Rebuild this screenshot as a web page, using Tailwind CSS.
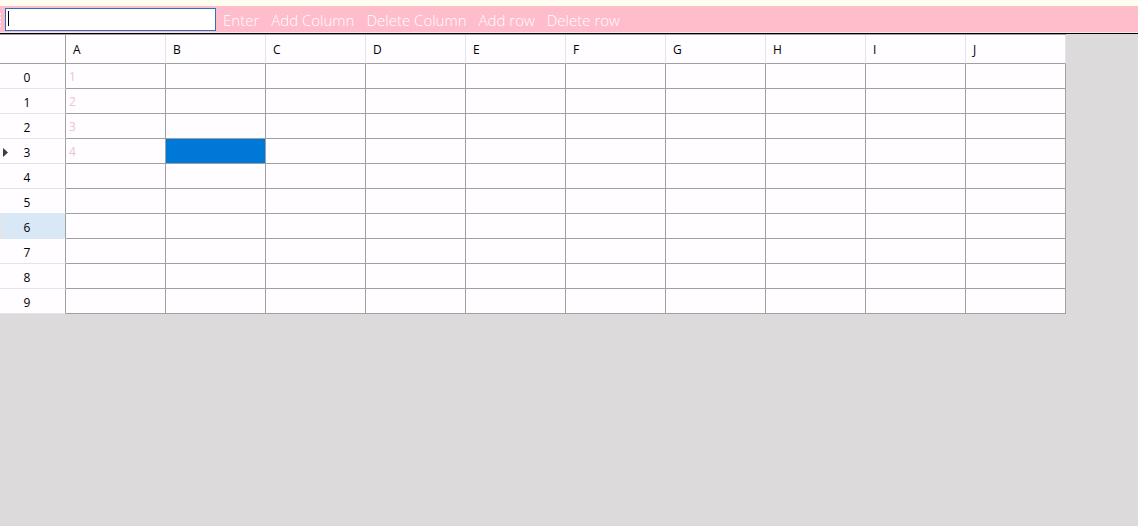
<!DOCTYPE html>
<html lang="en">
<head>
<meta charset="utf-8">
<title>Spreadsheet</title>
<script src="https://cdn.jsdelivr.net/npm/@tailwindcss/browser@4"></script>
</head>
<body class="min-h-screen bg-[#dcdadb] font-['Open_Sans',sans-serif] text-black">
<div class="h-[6px] bg-[#fffdf0]"></div>
<header class="flex h-[28px] items-center border-b border-black bg-[#ffbccb] shadow-[inset_0_-1px_#fbe6ea]">
  <div class="flex w-[5px] flex-col gap-[2px]" aria-hidden="true">
    <span class="h-[2px] w-px bg-[#fff0f3]"></span><span class="h-[2px] w-px bg-[#fff0f3]"></span><span class="h-[2px] w-px bg-[#fff0f3]"></span><span class="h-[2px] w-px bg-[#fff0f3]"></span>
  </div>
  <div class="relative h-[23px] w-[211px]">
    <input type="text" aria-label="Cell value" class="block h-full w-full border border-[#2f6fc0] bg-white px-1 text-sm outline-none">
    <span class="absolute top-[3px] left-[3px] h-[15px] w-px bg-black" aria-hidden="true"></span>
  </div>
  <nav class="flex gap-3 pl-[7px] text-[15px] leading-5 font-light whitespace-nowrap text-white">
    <button type="button">Enter</button>
    <button type="button">Add Column</button>
    <button type="button">Delete Column</button>
    <button type="button">Add row</button>
    <button type="button">Delete row</button>
  </nav>
</header>
<main class="overflow-hidden">
<table class="w-[1066px] table-fixed border-separate border-spacing-0 border-t border-[#a0a0a0] bg-[#fffdff] text-xs leading-4 [&_tbody_th]:border-r [&_tbody_th]:border-b [&_tbody_th]:border-r-[#a0a0a0] [&_tbody_th]:border-b-[#e4e4e6] [&_tbody_th]:p-0 [&_tbody_th]:pt-[3px] [&_tbody_th]:pr-[11px] [&_tbody_th]:font-normal [&_td]:border-r [&_td]:border-b [&_td]:border-[#a0a0a0] [&_td]:p-0 [&_td]:pt-[2px] [&_td]:pl-[3px] [&_td]:text-[#ecc3d0] [&_thead_th]:border-r [&_thead_th]:border-b [&_thead_th]:border-r-[#e4e4e6] [&_thead_th]:border-b-[#a0a0a0] [&_thead_th]:p-0 [&_thead_th]:pt-[2px] [&_thead_th]:pl-[7px] [&_thead_th]:text-left [&_thead_th]:font-normal [&_tbody_tr]:h-[25px]">
  <colgroup><col class="w-[66px]"><col span="10" class="w-[100px]"></colgroup>
  <thead>
    <tr class="h-[29px]"><th class="border-r-[#a0a0a0]!" aria-label="Row"></th><th scope="col">A</th><th scope="col">B</th><th scope="col">C</th><th scope="col">D</th><th scope="col">E</th><th scope="col">F</th><th scope="col">G</th><th scope="col">H</th><th scope="col">I</th><th scope="col">J</th></tr>
  </thead>
  <tbody>
    <tr><th scope="row">0</th><td>1</td><td></td><td></td><td></td><td></td><td></td><td></td><td></td><td></td><td></td></tr>
    <tr><th scope="row">1</th><td>2</td><td></td><td></td><td></td><td></td><td></td><td></td><td></td><td></td><td></td></tr>
    <tr><th scope="row">2</th><td>3</td><td></td><td></td><td></td><td></td><td></td><td></td><td></td><td></td><td></td></tr>
    <tr><th scope="row" class="relative"><svg class="absolute top-[9px] left-[3px] h-[9px] w-[5px] fill-[#3c3c3c]" viewBox="0 0 5 9" aria-hidden="true"><path d="M0 0 5 4.5 0 9Z"/></svg>3</th><td>4</td><td class="bg-[#0078d7]" aria-selected="true"></td><td></td><td></td><td></td><td></td><td></td><td></td><td></td><td></td></tr>
    <tr><th scope="row">4</th><td></td><td></td><td></td><td></td><td></td><td></td><td></td><td></td><td></td><td></td></tr>
    <tr><th scope="row" class="border-b-[#d8e8f7]!">5</th><td></td><td></td><td></td><td></td><td></td><td></td><td></td><td></td><td></td><td></td></tr>
    <tr><th scope="row" class="border-b-[#d8e8f7]! bg-[#d8e8f7] shadow-[inset_4px_0_#dfe6ee]">6</th><td></td><td></td><td></td><td></td><td></td><td></td><td></td><td></td><td></td><td></td></tr>
    <tr><th scope="row">7</th><td></td><td></td><td></td><td></td><td></td><td></td><td></td><td></td><td></td><td></td></tr>
    <tr><th scope="row">8</th><td></td><td></td><td></td><td></td><td></td><td></td><td></td><td></td><td></td><td></td></tr>
    <tr><th scope="row">9</th><td></td><td></td><td></td><td></td><td></td><td></td><td></td><td></td><td></td><td></td></tr>
  </tbody>
</table>
</main>
</body>
</html>
